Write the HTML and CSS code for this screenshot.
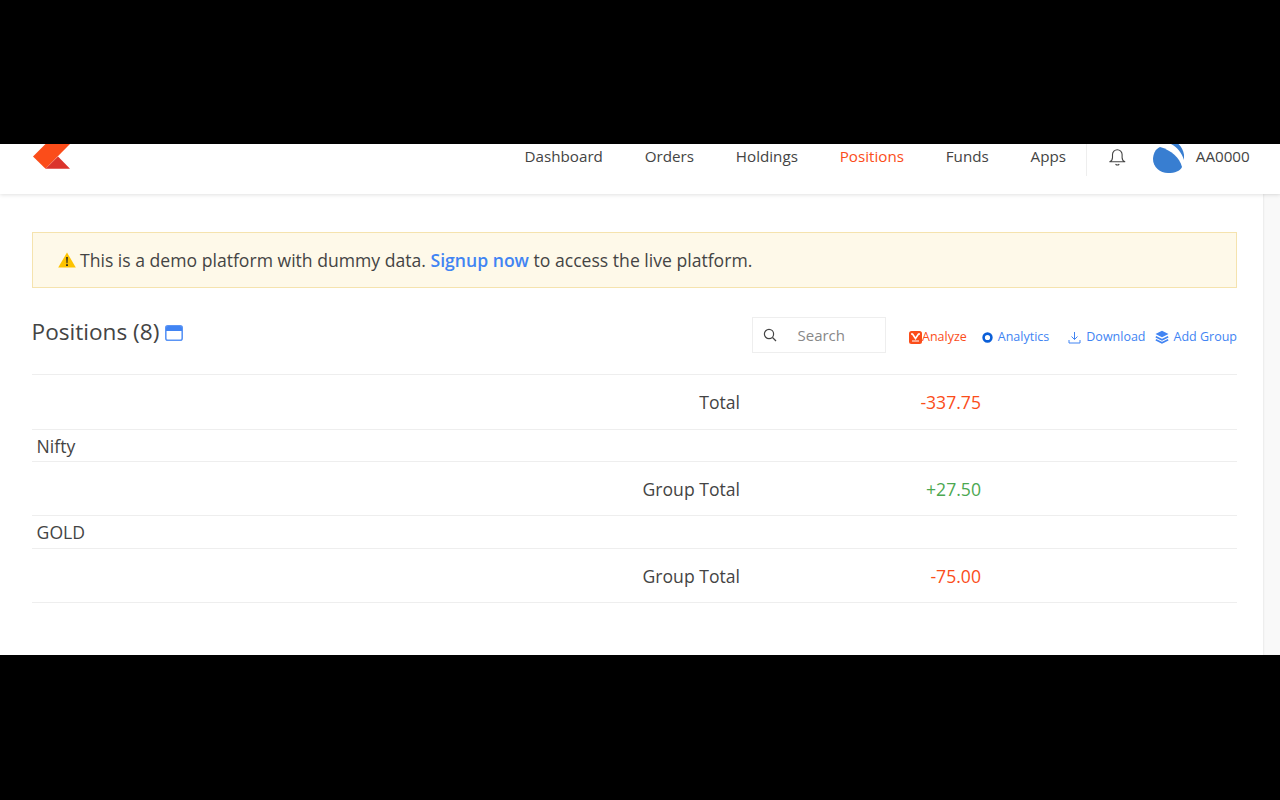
FILE: index.html
```html
<!DOCTYPE html>
<html lang="en">
<head>
<meta charset="utf-8">
<title>Positions</title>
<link rel="stylesheet" href="styles.css">
</head>
<body>
<div class="letterbox"></div>
<div class="frame">
  <header class="header">
    <svg class="logo" width="38" height="25" viewBox="0 0 38 25"><path fill="#fb4d1a" d="M1 12.500 13.500 0H38L13.500 24.700Z"/><path fill="#db342c" d="M13.500 24.700 26 12.500 38 24.700Z"/></svg>
    <nav class="nav">
      <a>Dashboard</a><a>Orders</a><a>Holdings</a><a class="active">Positions</a><a>Funds</a><a>Apps</a>
    </nav>
    <div class="user">
      <svg class="bell" width="18" height="18" viewBox="0 0 18 18" fill="none" stroke="#444" stroke-width="1.100"><path d="M.8 13.800c1.700-.8 2.700-2.300 2.700-4.300V6.500a4.800 4.800 0 0 1 9.600 0v3c0 2 1 3.500 2.700 4.300Z" stroke-linejoin="round"/><path d="M6.500 16.200c1 .8 2.800.8 3.800 0"/></svg>
      <svg class="avatar" width="32" height="34" viewBox="0 0 32 34"><path fill="#387ed1" d="M8 5C3 7 1 13 1 17c0 8 7 14 15 14 7 0 12-2 14-6C28 16 19 8 8 5Z"/><path fill="#387ed1" d="M19 2c6 3 11 9 13 16 1-7-2-14-8-18h-4Z"/></svg>
      <span class="uid">AA0000</span>
    </div>
  </header>
  <div class="page">
    <main class="content">
      <div class="notice"><span class="warn"><svg width="18" height="16" viewBox="0 0 18 16"><path fill="#fdc300" d="M9 .5 17.800 15.500H.2Z"/><path fill="#222" d="M8.200 5h1.600l-.3 6.200h-1zM8.100 12.200h1.800v1.700H8.100z"/></svg></span>This is a demo platform with dummy data. <a class="signup">Signup now</a> to access the live platform.</div>
      <section class="title-row">
        <h1 class="title">Positions (8)<svg class="win" width="18" height="16" viewBox="0 0 18 16"><rect x=".8" y=".8" width="16.400" height="14.400" rx="2" fill="#fff" stroke="#5b95f5" stroke-width="1.600"/><path fill="#4184f3" d="M1 3a2 2 0 0 1 2-2h12a2 2 0 0 1 2 2V6H1Z"/></svg></h1>
        <div class="tools">
          <div class="search">
            <svg width="14" height="14" viewBox="0 0 14 14" fill="none" stroke="#444" stroke-width="1.200"><circle cx="6" cy="6" r="4.600"/><path d="M9.500 9.500 13 13"/></svg>
            <span>Search</span>
          </div>
          <a class="tool analyze"><svg width="13" height="13" viewBox="0 0 13 13"><rect width="13" height="13" rx="2.500" fill="#fb4d1a"/><path d="M2 3h1.500l3 4.500 3-4.500H11" stroke="#fff" stroke-width="1.600" fill="none"/><path d="M3 10h7" stroke="#fff" stroke-width="1"/></svg>Analyze</a>
          <a class="tool analytics"><svg width="11" height="11" viewBox="0 0 11 11"><circle cx="5.500" cy="5.500" r="3.900" fill="none" stroke="#0b5fd8" stroke-width="2.600"/></svg>Analytics</a>
          <a class="tool download"><svg width="13" height="13" viewBox="0 0 13 13" fill="none" stroke="#4184f3" stroke-width="1"><path d="M6.500 1v7.500M3.500 5.500l3 3 3-3M1 9v3h11V9"/></svg>Download</a>
          <a class="tool addgroup"><svg width="14" height="14" viewBox="0 0 14 14"><path fill="#4184f3" d="M7 .8 13.500 4 7 7.200.5 4Z"/><path fill="none" stroke="#4184f3" stroke-width="1.500" d="M.8 6.800 7 9.800l6.200-3M.8 9.800 7 12.800l6.200-3"/></svg>Add Group</a>
        </div>
      </section>
      <div class="row total-row"><span class="label">Total</span><span class="value red">-337.75</span></div>
      <div class="row group-row">Nifty</div>
      <div class="row total-row"><span class="label">Group Total</span><span class="value green">+27.50</span></div>
      <div class="row group-row">GOLD</div>
      <div class="row total-row"><span class="label">Group Total</span><span class="value red">-75.00</span></div>
    </main>
    <aside class="rail"></aside>
  </div>
</div>
<div class="letterbox bottom"></div>
</body>
</html>
```
FILE: styles.css
```css
* { box-sizing: border-box; }
html, body { margin: 0; height: 800px; overflow: hidden; background: #000; }
body { font-family: "Open Sans", "Noto Sans", sans-serif; color: #444; }
.letterbox { height: 144px; background: #000; }
.letterbox.bottom { height: 145px; }
.frame { height: 511px; background: #fff; overflow: hidden; display: flex; flex-direction: column; }
.header { height: 50px; flex: none; display: flex; align-items: flex-start; padding-left: 32px; background: #fff; box-shadow: 0 1px 4px rgba(0,0,0,.12); position: relative; z-index: 2; }
.logo { flex: none; margin-right: auto; }
.nav { display: flex; gap: 41.8px; font-size: 15.2px; line-height: 25px; color: #444; margin-right: 19.500px; }
.nav .active { color: #fb4d1a; }
.user { display: flex; align-items: flex-start; border-left: 1px solid #eee; height: 32px; padding-left: 22.5px; width: 175.500px; flex: none; margin-right: 19px; }
.bell { margin-top: 4px; flex: none; }
.avatar { margin-left: 24.5px; margin-top: -2px; flex: none; }
.uid { margin-left: 12.3px; font-size: 15.2px; line-height: 25px; }
.page { flex: 1; display: flex; }
.content { width: 1263px; padding: 38px 26px 0 31.600px; background: #fff; }
.rail { flex: 1; background: #f9f9f9; box-shadow: inset 1px 0 2px rgba(0,0,0,.06); }
.notice { height: 56px; border: 1px solid #f5e3ae; background: #fef9e9; padding-left: 25px; font-size: 17.6px; line-height: 54px; color: #444; display: flex; white-space: pre; }
.warn { width: 22.400px; display: flex; align-items: center; }
.signup { color: #4184f3; font-weight: 600; }
.title-row { display: flex; justify-content: space-between; height: 87px; border-bottom: 1px solid #eee; }
.title { margin: 25px 0 0; font-size: 22.6px; font-weight: 400; line-height: 38px; display: flex; align-items: center; height: 38px; color: #444; }
.win { margin-left: 6px; margin-top: 2px; }
.tools { display: flex; align-items: flex-start; padding-top: 29px; }
.search { width: 134px; height: 36px; border: 1px solid #eee; display: flex; align-items: center; padding-left: 10px; gap: 20px; font-size: 15px; color: #888; margin-right: 22.5px; }
.tool { display: flex; align-items: center; font-size: 12.5px; line-height: 18px; color: #4184f3; padding-top: 11px; }
.tool svg { flex: none; margin-right: 5px; }
.analyze { color: #fb4d1a; margin-right: 15px; }
.analyze svg { margin-right: 0; }
.analytics { margin-right: 19px; }
.download { margin-right: 9px; }
.row { border-bottom: 1px solid #eee; }
.total-row { height: 54.500px; padding-top: 1px; display: grid; grid-template-columns: 708.400px 241px; font-size: 17.6px; line-height: 53px; }
.label { text-align: right; }
.value { text-align: right; }
.red { color: #fb4d1a; }
.green { color: #4ba851; }
.group-row { height: 32.400px; padding-left: 5px; font-size: 17.6px; line-height: 33px; }
```
